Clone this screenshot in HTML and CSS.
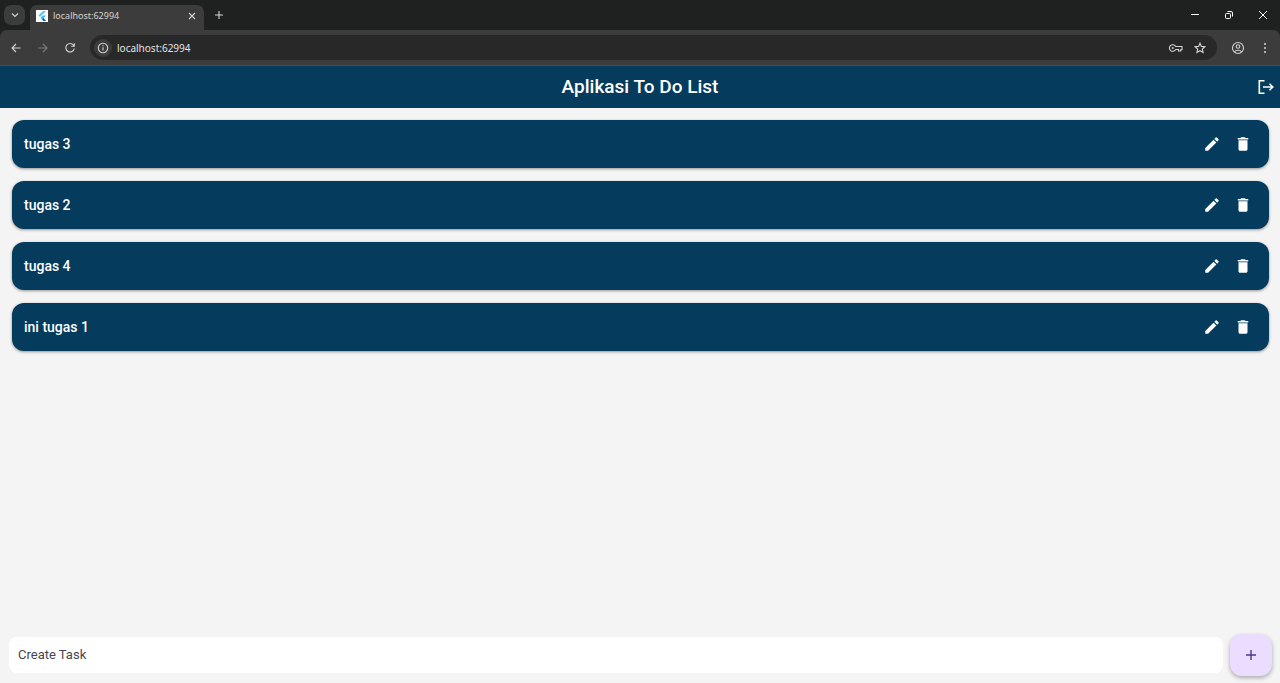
FILE: index.html
```html
<!DOCTYPE html>
<html lang="id">
<head>
<meta charset="utf-8">
<meta name="viewport" content="width=device-width, initial-scale=1">
<title>Aplikasi To Do List</title>
<link rel="stylesheet" href="styles.css">
</head>
<body>
<svg class="sprite" aria-hidden="true">
  <symbol id="pencil" viewBox="0 0 24 24"><path d="M3 17.25V21h3.75L17.81 9.94l-3.75-3.75zM20.71 7.04a1 1 0 0 0 0-1.41l-2.34-2.34a1 1 0 0 0-1.41 0l-1.83 1.83 3.75 3.75z"/></symbol>
  <symbol id="trash" viewBox="0 0 24 24"><path d="M6 19c0 1.1.9 2 2 2h8c1.100 0 2-.9 2-2V7H6zM19 4h-3.500l-1-1h-5l-1 1H5v2h14z"/></symbol>
</svg>

<div class="browser">
  <div class="tabstrip">
    <button class="tab-search" aria-label="Search tabs"><svg class="stroke" width="10" height="10" viewBox="0 0 10 10"><path d="M2 3.500 5 6.500 8 3.500"/></svg></button>
    <div class="tab">
      <svg class="favicon" width="12" height="12" viewBox="0 0 12 12"><path fill="#fff" d="M0 0h12v12H0z"/><path fill="#54c5f8" d="M7 1h3L4 7 2.500 5.500z"/><path fill="#29b6f6" d="M7 5.500h3L7.500 8 6 9.500 4.500 8z"/><path fill="#01579b" d="M6 9.500 7.500 8l2.500 3H7.500z"/></svg>
      <span class="tab-title">localhost:62994</span>
      <button class="tab-close" aria-label="Close tab"><svg class="stroke" width="8" height="8" viewBox="0 0 8 8"><path d="m1 1 6 6M7 1 1 7"/></svg></button>
    </div>
    <button class="new-tab" aria-label="New tab"><svg class="stroke" width="10" height="10" viewBox="0 0 10 10"><path d="M5 1v8M1 5h8"/></svg></button>
    <div class="window-controls">
      <button aria-label="Minimize"><svg class="stroke thin" width="10" height="10" viewBox="0 0 10 10"><path d="M1 4.500h8"/></svg></button>
      <button aria-label="Restore"><svg class="stroke thin" width="10" height="10" viewBox="0 0 10 10"><rect x="1.500" y="3.500" width="5" height="5" rx="1"/><path d="M3.500 1.500H7a1.500 1.500 0 0 1 1.500 1.500v3.500"/></svg></button>
      <button aria-label="Close"><svg class="stroke thin" width="10" height="10" viewBox="0 0 10 10"><path d="m1 1 8 8M9 1 1 9"/></svg></button>
    </div>
  </div>
  <div class="toolbar">
    <button aria-label="Back"><svg class="stroke" width="12" height="12" viewBox="0 0 12 12"><path d="M10.500 6H2M6 2 2 6l4 4"/></svg></button>
    <button class="inactive" aria-label="Forward"><svg class="stroke" width="12" height="12" viewBox="0 0 12 12"><path d="M1.500 6H10M6 2l4 4-4 4"/></svg></button>
    <button aria-label="Reload"><svg class="stroke" width="12" height="12" viewBox="0 0 12 12"><path d="M9.800 3.600A4.300 4.300 0 1 0 10.300 6.500M10.300 1.200v3H7.200"/></svg></button>
    <div class="address">
      <button class="site-info" aria-label="Site information"><svg class="stroke" width="12" height="12" viewBox="0 0 12 12"><circle cx="6" cy="6" r="4.700"/><path d="M6 5.300v3.200M6 3.300v1"/></svg></button>
      <input class="url" aria-label="Address" value="localhost:62994">
      <button aria-label="Passwords"><svg class="stroke" width="16" height="12" viewBox="0 0 16 12"><path d="M7.700 4.500H14v3.200h-1.300V9h-2.200V7.500H7.700a3.300 3.300 0 1 1 0-3z"/><circle class="dot" cx="4.800" cy="6" r="1"/></svg></button>
      <button aria-label="Bookmark"><svg class="stroke" width="12" height="12" viewBox="0 0 12 12"><path d="m6 1.200 1.400 3.200 3.500.3-2.600 2.300.8 3.500L6 8.700l-3.100 1.800.8-3.500L1.100 4.700l3.500-.3z"/></svg></button>
    </div>
    <button aria-label="Profile"><svg class="stroke" width="14" height="14" viewBox="0 0 14 14"><circle cx="7" cy="7" r="5.500"/><circle cx="7" cy="5.500" r="1.800"/><path d="M3.300 10.800c1.800-2 5.600-2 7.400 0"/></svg></button>
    <button aria-label="Menu"><svg class="dot" width="12" height="12" viewBox="0 0 12 12"><circle cx="6" cy="2" r="1"/><circle cx="6" cy="6" r="1"/><circle cx="6" cy="10" r="1"/></svg></button>
  </div>
</div>

<header class="appbar">
  <h1>Aplikasi To Do List</h1>
  <button aria-label="Logout"><svg width="18" height="18" viewBox="0 0 18 18"><path d="M7.500 2.800H2.300v12.400h5.200M6 9h9.500M12.500 5.800 15.800 9l-3.300 3.200"/></svg></button>
</header>

<main>
  <ul class="tasks">
    <li><span>tugas 3</span><button aria-label="Edit tugas 3"><svg><use href="#pencil"/></svg></button><button aria-label="Delete tugas 3"><svg><use href="#trash"/></svg></button></li>
    <li><span>tugas 2</span><button aria-label="Edit tugas 2"><svg><use href="#pencil"/></svg></button><button aria-label="Delete tugas 2"><svg><use href="#trash"/></svg></button></li>
    <li><span>tugas 4</span><button aria-label="Edit tugas 4"><svg><use href="#pencil"/></svg></button><button aria-label="Delete tugas 4"><svg><use href="#trash"/></svg></button></li>
    <li><span>ini tugas 1</span><button aria-label="Edit ini tugas 1"><svg><use href="#pencil"/></svg></button><button aria-label="Delete ini tugas 1"><svg><use href="#trash"/></svg></button></li>
  </ul>
</main>

<form class="composer">
  <input type="text" aria-label="Create Task" placeholder="Create Task">
  <button type="button" class="add" aria-label="Add task"><svg width="12" height="12" viewBox="0 0 12 12"><path d="M6 1v10M1 6h10"/></svg></button>
</form>
</body>
</html>
```

FILE: styles.css
```css
* { box-sizing: border-box; }

body {
  margin: 0;
  min-height: 100vh;
  display: flex;
  flex-direction: column;
  background: #f4f4f4;
  font-family: Roboto, "Liberation Sans", sans-serif;
}

button {
  display: inline-flex;
  align-items: center;
  justify-content: center;
  padding: 0;
  border: 0;
  background: none;
  color: inherit;
  flex: none;
}

input { border: 0; min-width: 0; outline: 0; }

.sprite { display: none; }

.stroke {
  fill: none;
  stroke: currentColor;
  stroke-width: 1.1;
}

.stroke.thin { stroke-width: 1; }
.dot { fill: currentColor; stroke: none; }

/* Browser frame */
.browser {
  background: #1f2120;
  color: #d4d4d4;
  font-family: "Noto Sans", sans-serif;
}

.tabstrip {
  display: flex;
  align-items: center;
  height: 30px;
  padding-left: 4px;
}

.tab-search {
  width: 21px;
  height: 20px;
  border-radius: 7px;
  background: #3c3c3c;
}

.tab {
  align-self: flex-end;
  display: flex;
  align-items: center;
  gap: 5px;
  width: 174px;
  height: 25px;
  margin-left: 5px;
  padding: 0 8px 4px 6px;
  border-radius: 7px 7px 0 0;
  background: #3c3c3c;
}

.tab-title {
  flex: 1;
  font-size: 9px;
  line-height: 12px;
}

.new-tab { width: 30px; height: 30px; }
.window-controls { display: flex; margin-left: auto; color: #fff; }
.window-controls button { width: 34px; height: 30px; }

.toolbar {
  display: flex;
  align-items: center;
  height: 36px;
  padding: 0 2px;
  border-radius: 7px 7px 0 0;
  border-bottom: 1px solid #4a4a4a;
  background: #3c3c3c;
}

.toolbar > button { width: 27px; height: 26px; }
.toolbar .inactive { color: #7c7c7c; }

.address {
  flex: 1;
  display: flex;
  align-items: center;
  height: 25px;
  margin: 0 7px;
  padding: 0 5px 0 4px;
  border-radius: 13px;
  background: #282828;
}

.address button { width: 24px; height: 20px; }
.address .site-info { width: 18px; height: 18px; border-radius: 9px; background: #3c3c3c; }

.url {
  flex: 1;
  padding: 0 0 0 5px;
  background: none;
  color: #e3e3e3;
  font: 10px/16px "Noto Sans", sans-serif;
}

/* App */
.appbar {
  display: grid;
  grid-template-columns: 1fr auto 1fr;
  align-items: center;
  height: 42px;
  padding: 0 5px;
  background: #053b5c;
  color: #fff;
}

.appbar h1 {
  grid-column: 2;
  margin: 0;
  font-size: 19px;
  line-height: 24px;
  font-weight: 500;
}

.appbar button { justify-self: end; }
.appbar path { fill: none; stroke: #fff; stroke-width: 1.6; }

main { flex: 1; padding: 12px 11px 12px 12px; }

.tasks {
  display: flex;
  flex-direction: column;
  gap: 13px;
  margin: 0;
  padding: 0;
  list-style: none;
}

.tasks li {
  display: flex;
  align-items: center;
  height: 48px;
  padding: 0 11px 0 12px;
  border-radius: 12px;
  background: #053b5c;
  box-shadow: 0 1px 3px rgb(0 0 0 / 40%);
  color: #fff;
  font-size: 14px;
  line-height: 20px;
  font-weight: 500;
}

.tasks span { flex: 1; }
.tasks button { width: 31px; height: 31px; }
.tasks svg { width: 18px; height: 18px; fill: #fff; }

.composer {
  display: flex;
  align-items: center;
  gap: 7px;
  padding: 0 8px 7px 9px;
}

.composer input {
  flex: 1;
  height: 36px;
  padding: 0 9px 2px;
  border-radius: 8px;
  background: #fff;
  color: #49454f;
  font: 13px/18px Roboto, "Liberation Sans", sans-serif;
}

.composer input::placeholder { color: #49454f; opacity: 1; }

.add {
  width: 42px;
  height: 42px;
  border-radius: 12px;
  background: #eaddff;
  box-shadow: 0 2px 4px rgb(0 0 0 / 30%);
}

.add path { fill: none; stroke: #4f378b; stroke-width: 1.4; }
```
